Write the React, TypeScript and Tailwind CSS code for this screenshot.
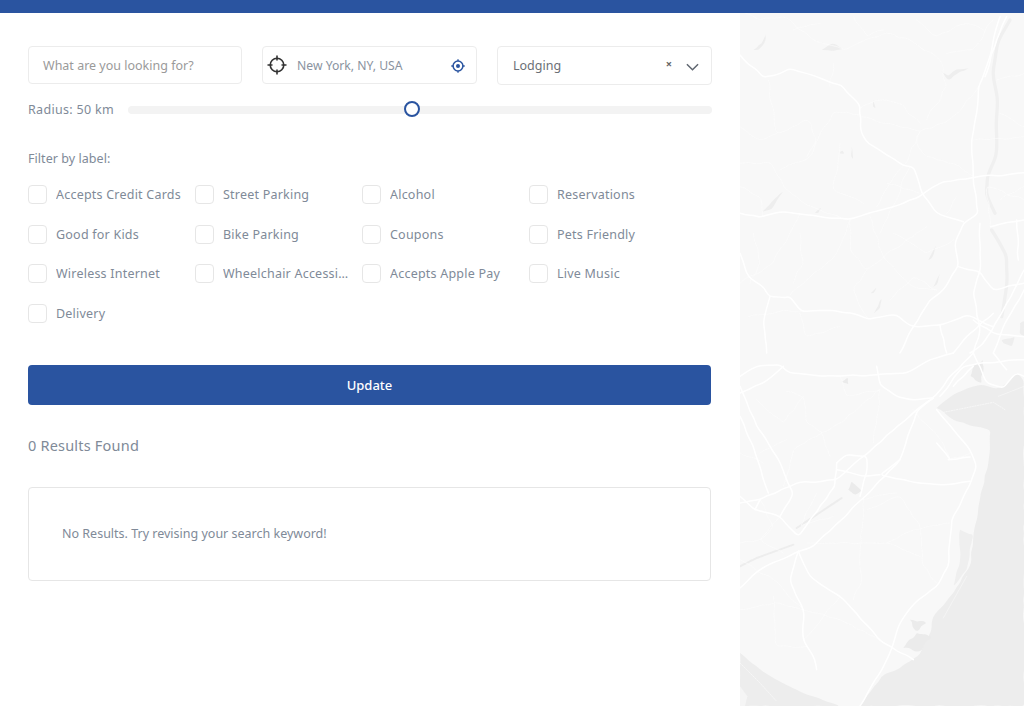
const rows = [
  ["Accepts Credit Cards", "Street Parking", "Alcohol", "Reservations"],
  ["Good for Kids", "Bike Parking", "Coupons", "Pets Friendly"],
  ["Wireless Internet", "Wheelchair Accessible", "Accepts Apple Pay", "Live Music"],
  ["Delivery"],
];

const majorTop = [
  "M0 165 L20 190 L45 205 L70 232 L110 225 L150 205 L200 220 L255 240 L305 255 L335 290 L360 315 L365 400 L385 430 L440 465 L490 498 L520 500 L545 580 L590 640 L670 665",
  "M0 640 L60 652 L130 635 L230 648 L330 658 L400 635 L490 610 L545 585 L610 545 L700 532 L852 518",
  "M780 50 L750 170 L715 260 L710 340 L695 420 L700 530 L715 640 L670 670 L645 730 L655 800 L610 870 L570 900 L520 980 L480 1059",
  "M800 50 L770 120 L735 230",
  "M0 760 L25 830 L70 860 L90 890 L150 890 L185 935 L260 932 L330 938 L385 958 L470 945 L520 980 L600 975 L680 945 L760 980",
  "M90 890 L70 970 L80 1059",
  "M655 800 L720 815 L760 870 L852 850",
  "M720 670 L720 815 L700 880 L720 990 L700 1059",
  "M852 810 L790 930 L730 1030 L690 1059",
  "M830 660 L835 780",
  "M752 680 L852 660",
  "M852 870 L800 960 L760 1059",
  "M700 960 L760 1000 L852 1010",
  "M640 1059 L690 1000 L760 940",
  "M600 975 L620 1059",
];
const minorTop = [
  "M0 490 L95 490 L130 560 L180 600 L260 640 L320 660",
  "M360 345 L280 335 L240 400 L210 470 L120 510",
  "M365 350 L430 370 L540 395 L610 370 L670 320 L715 260",
  "M540 395 L530 430 L560 470 L640 490 L700 530",
  "M540 395 L510 460 L490 498 L450 550 L410 620",
  "M360 325 L420 300 L480 310 L540 370",
  "M330 660 L290 760 L200 840 L150 885",
  "M330 660 L330 750 L380 810 L440 760 L560 680",
  "M380 810 L340 870 L385 958",
  "M390 650 L430 770 L520 860 L590 870",
  "M0 30 L60 60 L130 50 L220 120 L310 150 L430 100 L510 120 L600 180 L620 260 L560 360",
  "M280 190 L270 260 M240 70 L160 90 M340 50 L380 110 L430 90",
  "M200 470 L230 420 L205 360 L110 400 L85 240",
  "M300 430 L280 570 L370 610",
  "M440 550 L540 580 M650 590 L620 640",
  "M0 850 L100 790 L180 640",
  "M700 420 L852 410",
  "M750 680 L740 560 L852 600",
  "M25 950 L130 930 L185 935",
  "M510 500 L420 700 M180 940 L200 1010 L300 980",
  "M0 380 L60 420 L110 400 M0 560 L60 590 L70 650",
  "M530 60 L590 110 L680 70 L730 90 M620 160 L700 150 L760 60",
  "M460 700 L560 760 L640 720 M450 900 L520 830 L590 870",
  "M180 700 L190 780 L160 850 M40 700 L60 790 L30 850",
  "M770 240 L852 220 M780 340 L852 380 M780 600 L852 560",
];
const waterTop = [
  "M810 60 L775 120 L758 220 L772 290 L768 470 L742 530 L738 580 L765 640",
  "M755 690 L800 770 L800 860 L785 950",
];
const lakesTop = [
  "M40 150 L65 130 L80 95 L75 125 L55 150 Z",
  "M245 150 L278 130 L310 148 L280 152 Z",
  "M600 210 L625 240 L660 215 L690 205 L650 208 L625 228 Z",
  "M68 635 L95 628 L130 575 L105 595 Z",
  "M225 638 L245 622 L235 640 Z",
  "M298 460 L305 448 L315 462 Z M335 440 L340 478 L333 470 Z",
  "M400 300 L408 325 L398 320 Z",
  "M565 780 L590 735 L575 775 Z M580 860 L605 810 L590 855 Z",
  "M402 940 L425 895 L420 925 Z M392 880 L410 862 L400 880 Z",
  "M840 970 L852 960 L852 1010 L838 1000 Z M785 1020 L825 1010 L815 1040 L790 1030 Z",
];
const majorBottom = [
  "M0 70 L50 40 L120 35 L150 60 L230 68 L300 70 L410 65 L500 60 L570 20 L640 0",
  "M0 120 L70 90 L130 40",
  "M410 40 L420 95 L470 130 L510 140 L580 135 L640 60 L700 0",
  "M580 135 L530 175 L480 320 L370 435 L220 580 L175 595 L60 650 L0 705",
  "M580 135 L530 170 L370 310 L290 380 L170 390 L60 440 L0 450",
  "M590 170 L640 230 L690 290 L710 340 L690 395 L635 500 L625 640 L590 700 L520 755 L475 820 L450 900 L420 960 L360 1059",
  "M480 320 L420 365 L520 388 L620 395 L690 385",
  "M625 320 L690 312 M590 270 L630 320",
  "M175 595 L150 685 L190 770 L190 860 L225 920 L230 950",
  "M175 595 L210 670 L300 730 L430 870 L520 920",
  "M290 330 L320 305 L380 310 L380 360 L360 430",
  "M290 330 L285 400 L175 550 L120 490 L45 470 L0 430",
  "M45 470 L60 440 M120 490 L160 420 L110 310 L50 220 L0 100",
  "M0 190 L40 280 L85 420",
  "M700 0 L740 90 L790 105 L830 60 L852 70",
  "M290 350 L370 370 L420 365",
  "M600 130 L670 40 L720 30 L852 20",
  "M640 100 L700 40 M760 0 L800 50",
];
const minorBottom = [
  "M140 115 L190 130 L200 210 L245 240 L300 210 L420 110",
  "M245 240 L160 290 L130 400",
  "M245 240 L270 310 M420 110 L400 270",
  "M370 440 L360 600 L365 680 L340 740",
  "M380 470 L480 430 L540 520 L550 640 L590 690",
  "M200 570 L360 570 L440 570 L540 610",
  "M440 570 L520 530 L630 510",
  "M0 620 L100 680 L190 770",
  "M0 770 L120 750 L300 800 L420 860",
  "M100 730 L110 880 L200 880",
  "M520 170 L610 270 L630 320 L690 300",
  "M300 730 L190 860",
  "M370 440 L470 420",
  "M50 140 L130 210 L190 130 M60 300 L140 260 M0 300 L70 330",
  "M300 70 L320 130 L420 110",
  "M60 440 L100 520 L60 560 L0 570 M120 490 L60 560 L130 600",
  "M230 420 L180 520 L280 490",
];
const greyStrips = ["M170 525 L305 435", "M0 640 L50 615 L160 575"];

function rnd(n: number) {
  const x = Math.sin(n * 12.9898) * 43758.5453;
  return x - Math.floor(x) - 0.5;
}

function wiggle(d: string, amp = 5, step = 22) {
  return d
    .split("M")
    .filter(Boolean)
    .map((part, pi) => {
      const closed = part.includes("Z");
      const pts = part
        .replace("Z", "")
        .trim()
        .split("L")
        .map((s) => s.trim().split(/\s+/).map(Number));
      if (closed) pts.push(pts[0]);
      const out: number[][] = [pts[0]];
      pts.slice(1).forEach((p, i) => {
        const a = pts[i];
        const len = Math.hypot(p[0] - a[0], p[1] - a[1]);
        const n = Math.max(1, Math.round(len / step));
        for (let k = 1; k <= n; k++) {
          const t = k / n;
          const off = k === n ? 0 : rnd(pi * 31 + i * 7 + k + a[0] * 0.37 + a[1] * 0.11) * amp * 2;
          out.push([
            a[0] + (p[0] - a[0]) * t + (-(p[1] - a[1]) / len) * off,
            a[1] + (p[1] - a[1]) * t + ((p[0] - a[0]) / len) * off,
          ]);
        }
      });
      let s = `M${out[0][0].toFixed(1)} ${out[0][1].toFixed(1)}`;
      for (let i = 1; i < out.length - 1; i++) {
        const mx = (out[i][0] + out[i + 1][0]) / 2;
        const my = (out[i][1] + out[i + 1][1]) / 2;
        s += `Q${out[i][0].toFixed(1)} ${out[i][1].toFixed(1)} ${mx.toFixed(1)} ${my.toFixed(1)}`;
      }
      const last = out[out.length - 1];
      s += `L${last[0].toFixed(1)} ${last[1].toFixed(1)}`;
      return closed ? s + "Z" : s;
    })
    .join("");
}

function Crosshair() {
  return (
    <svg viewBox="0 0 20 20" className="h-5 w-5 shrink-0 text-[#333]" fill="none" stroke="currentColor">
      <circle cx="10" cy="10" r="6.8" strokeWidth="1.6" />
      <path d="M10 .5V5.5M10 14.5V19.5M.5 10H5.5M14.5 10H19.5" strokeWidth="1.6" />
    </svg>
  );
}

function Locate() {
  return (
    <svg viewBox="0 0 14 14" className="h-[14px] w-[14px] text-[#2a54a0]" fill="none" stroke="currentColor">
      <circle cx="7" cy="7" r="4.9" strokeWidth="1.5" />
      <circle cx="7" cy="7" r="2" fill="currentColor" stroke="none" />
      <path d="M7 .3V2M7 12V13.7M.3 7H2M12 7H13.7" strokeWidth="1.3" />
    </svg>
  );
}

function Map() {
  return (
    <svg viewBox="0 13 284 693" preserveAspectRatio="none" className="h-full w-full blur-[0.35px]" fill="none" strokeLinecap="round" strokeLinejoin="round">
      <g transform="scale(0.33333)">
        {lakesTop.map((d) => <path key={d} d={wiggle(d, 2, 12)} fill="#eeeeee" />)}
        {waterTop.map((d) => <path key={d} d={wiggle(d, 2, 30)} stroke="#f0f0f0" strokeWidth="10" />)}
        {minorTop.map((d) => <path key={d} d={wiggle(d, 5, 18)} stroke="#fcfcfc" strokeWidth="2" />)}
        {majorTop.map((d) => <path key={d} d={wiggle(d, 3, 24)} stroke="#ffffff" strokeWidth="4.5" />)}
      </g>
      <g transform="translate(0 353) scale(0.33333)">
        <path d={wiggle("M590 165 L640 125 L700 100 L725 95 L765 108 L800 92 L828 58 L852 85 L852 1059 L358 1059 L425 970 L480 945 L540 905 L575 830 L580 790 L640 720 L690 640 L715 460 L745 330 L752 232 L650 205 Z", 3, 20)} fill="#ededed" />
        <path d={wiggle("M0 900 L60 950 L120 985 L200 1025 L300 1059 L0 1059 Z", 2, 20)} fill="#ededed" />
        <path d="M0 1000 L22 1030 L15 1059 L0 1059 Z" fill="#f5f5f5" />
        <path d={wiggle("M490 885 L530 840 L575 850 L540 895 Z M510 800 L560 810 L530 835 Z", 4, 10)} fill="#ebebeb" />
        <path d={wiggle("M325 410 L335 385 L365 415 L345 425 Z M305 85 L325 75 L325 95 Z", 2, 8)} fill="#ebebeb" />
        <path d={wiggle("M660 530 L700 545 L680 650 L640 700 L660 620 Z", 3, 15)} fill="#efefef" />
        <path d={wiggle("M700 40 L730 20 L725 90 L690 70 Z", 3, 10)} fill="#ebebeb" />
        <path d="M610 178 L760 148 L795 170" stroke="#fafafa" strokeWidth="2" strokeDasharray="4 4" />
        <path d="M0 930 L60 990 L110 1045" stroke="#fafafa" strokeWidth="2" strokeDasharray="4 4" />
        <path d="M775 130 L852 100 M610 795 L680 670" stroke="#f7f7f7" strokeWidth="2" />
        {greyStrips.map((d) => <path key={d} d={d} stroke="#ededed" strokeWidth="6" strokeDasharray="8 3" />)}
        {minorBottom.map((d) => <path key={d} d={wiggle(d, 4, 18)} stroke="#fcfcfc" strokeWidth="2" />)}
        {majorBottom.map((d) => <path key={d} d={wiggle(d, 2.5, 24)} stroke="#ffffff" strokeWidth="4.5" />)}
      </g>
    </svg>
  );
}

export default function App() {
  return (
    <div className="flex h-[706px] w-[1024px] flex-col overflow-hidden bg-white font-['Noto_Sans',sans-serif] text-[#808a98]">
      <div className="h-[13px] shrink-0 bg-[#2a54a0]" />
      <div className="flex min-h-0 flex-1">
        <main className="w-[740px] shrink-0 pl-[28px] pr-[28px] pt-[33px]">
          <div className="grid grid-cols-[214px_215px_215px] gap-5">
            <div className="flex h-[38px] items-center rounded border border-[#ececec] pl-[14px] pt-[3px] text-[12.5px] text-[#9a9a9a]">
              What are you looking for?
            </div>
            <div className="flex h-[38px] items-center rounded border border-[#ececec] pl-[4px] pr-[11px] text-[12.2px] text-[#8a93a0]">
              <Crosshair />
              <span className="ml-[10px] flex-1 pt-[2px]">New York, NY, USA</span>
              <span className="mt-[2px]"><Locate /></span>
            </div>
            <div className="flex h-[39px] items-center rounded border border-[#ececec] pl-[15px] pr-[12px] text-[12.5px] text-[#6b6f76]">
              <span className="flex-1 pt-[2px]">Lodging</span>
              <span className="mr-[14px] mt-[-3px] text-[11px] font-bold text-[#666]">×</span>
              <svg viewBox="0 0 14 8" className="mt-[2px] h-[8px] w-[13px] text-[#5f6670]" fill="none" stroke="currentColor" strokeWidth="1.6">
                <path d="M1 1L7 7L13 1" />
              </svg>
            </div>
          </div>

          <div className="mt-[15px] flex h-[20px] items-center">
            <span className="w-[100px] shrink-0 text-[12.5px] tracking-[0.32px]">Radius: 50 km</span>
            <div className="relative h-2 flex-1 rounded-full bg-[#f3f3f3]">
              <div className="absolute left-[276px] top-[-5px] h-4 w-4 rounded-full border-2 border-[#2a54a0] bg-white" />
            </div>
          </div>

          <p className="mt-[29px] text-[12.5px] leading-[20px] tracking-[0.05px]">Filter by label:</p>

          <div className="mt-[16px] grid grid-cols-[repeat(4,167px)] gap-y-[20.5px]">
            {rows.flat().map((label) => (
              <label key={label} className="flex h-[19px] items-center">
                <span className="h-[19px] w-[19px] shrink-0 rounded border border-[#e6e6e6]" />
                <span className="ml-[9px] w-[126px] truncate pt-[2px] text-[12.5px] tracking-[0.22px]">{label}</span>
              </label>
            ))}
          </div>

          <button className="mt-[42px] h-10 w-[683px] rounded-sm bg-[#2a54a0] pt-[2px] text-[13px] font-medium text-white">
            Update
          </button>

          <p className="mt-[30px] text-[14.5px] leading-[20px] tracking-[0.2px]">0 Results Found</p>

          <div className="mt-[32px] flex h-[94px] w-[683px] items-center rounded border border-[#e6e6e6] pl-[33px] pt-[2px] text-[12.5px]">
            No Results. Try revising your search keyword!
          </div>
        </main>
        <aside className="min-w-0 flex-1 bg-[#f8f8f8]">
          <Map />
        </aside>
      </div>
    </div>
  );
}
